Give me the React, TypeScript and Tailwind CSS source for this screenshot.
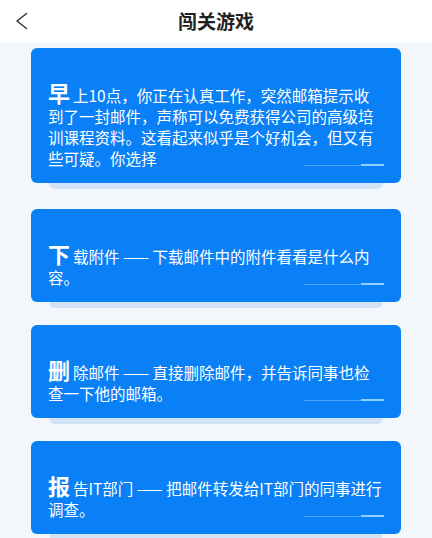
const font = "font-['Noto_Sans_CJK_SC','Noto_Sans',sans-serif]";

type Option = {
  head: string;
  rest: string;
};

const cards: Option[] = [
  {
    head: "早",
    rest: "上10点，你正在认真工作，突然邮箱提示收到了一封邮件，声称可以免费获得公司的高级培训课程资料。这看起来似乎是个好机会，但又有些可疑。你选择",
  },
  { head: "下", rest: "载附件 —— 下载邮件中的附件看看是什么内容。" },
  { head: "删", rest: "除邮件 —— 直接删除邮件，并告诉同事也检查一下他的邮箱。" },
  { head: "报", rest: "告IT部门 —— 把邮件转发给IT部门的同事进行调查。" },
];

function Card({ head, rest, first }: Option & { first?: boolean }) {
  return (
    <div className={`relative ${first ? "mb-[3px]" : ""}`}>
      {/* stacked layer peeking under the card */}
      <div className="absolute left-[18px] right-[18px] top-[6px] -bottom-[6px] rounded-[6px] bg-[#d2e4f8]" />
      <div className="relative rounded-[6px] bg-[#0a80f6] pt-[32px] pb-[14px] pl-[17px] pr-[19px]">
        <p className="text-[15.5px] leading-[21px] text-white">
          <span className="mr-[3px] text-[22px] leading-[24px] font-bold">{head}</span>
          {rest}
        </p>
        <div className="absolute bottom-[17px] right-[17px] flex items-center">
          <div className="h-px w-[57px] bg-[#4aa3f9]" />
          <div className="h-[2px] w-[23px] bg-[#8fd0ff]" />
        </div>
      </div>
    </div>
  );
}

export default function App() {
  return (
    <div className={`w-[432px] h-[538px] overflow-hidden bg-[#f3f6fa] ${font}`}>
      {/* Header */}
      <div className="flex h-[42px] items-center bg-white">
        <div className="w-[50px] pl-[15px]">
          <svg width="13" height="18" viewBox="0 0 13 18" fill="none">
            <path d="M11.5 1.5 L2 9 L11.5 16.5" stroke="#333" strokeWidth="1.5" strokeLinecap="round" strokeLinejoin="round" />
          </svg>
        </div>
        <h1 className="flex-1 text-center text-[19px] font-bold text-[#222]">闯关游戏</h1>
        <div className="w-[50px]" />
      </div>

      {/* Options */}
      <div className="flex flex-col gap-[23px] px-[31px] pt-[6px]">
        {cards.map((c, i) => (
          <Card key={i} {...c} first={i === 0} />
        ))}
      </div>
    </div>
  );
}
